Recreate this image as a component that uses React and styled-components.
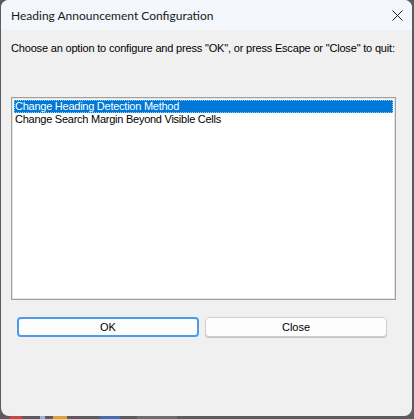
import React from 'react';
import styled, { createGlobalStyle } from 'styled-components';

const GlobalStyle = createGlobalStyle`
  html, body {
    margin: 0;
    padding: 0;
    background: #575d62;
    overflow: hidden;
  }
`;

const Desktop = styled.div`
  width: 414px;
  height: 419px;
  display: flex;
  flex-direction: column;
`;

const Window = styled.div`
  width: 411px;
  height: 416px;
  margin: 0 0 0 1px;
  border-radius: 8px;
  overflow: hidden;
  background: #f0f0f0;
  display: flex;
  flex-direction: column;
`;

const TitleBar = styled.div`
  height: 30px;
  flex: none;
  background: #f3f6fa;
  display: flex;
  align-items: center;
  justify-content: space-between;
  padding: 0 9px 0 10px;
  font-family: Lato, 'Noto Sans', sans-serif;
  font-size: 12px;
  color: #1a1a1a;
`;

const Body = styled.div`
  flex: 1;
  display: flex;
  flex-direction: column;
  padding: 11px 16px 0 10px;
  font-family: 'Liberation Sans', Arial, sans-serif;
  font-size: 11px;
  color: #000;
`;

const Prompt = styled.div`
  line-height: 14px;
  white-space: nowrap;
  letter-spacing: -0.18px;
`;

const ListBox = styled.div`
  margin-top: 42px;
  width: 385px;
  height: 203px;
  box-sizing: border-box;
  background: #fff;
  border: 1px solid #a0a0a0;
  box-shadow: inset 1px 1px 0 #e3e3e3, inset -1px -1px 0 #e3e3e3;
  padding: 2px 2px;
`;

const Item = styled.div`
  height: 13px;
  line-height: 13px;
  padding-left: 1px;
  box-sizing: border-box;
  white-space: nowrap;
  letter-spacing: -0.25px;
  color: ${(p) => (p.selected ? '#fff' : '#000')};
  background: ${(p) => (p.selected ? '#0078d7' : 'transparent')};
  outline: ${(p) => (p.selected ? '1px dotted #ffffff99' : 'none')};
  outline-offset: -1px;
`;

const ButtonRow = styled.div`
  margin: 17px 0 0 6px;
  display: flex;
  gap: 6px;
`;

const Button = styled.button`
  width: 182px;
  height: 20px;
  box-sizing: border-box;
  padding: 0;
  border-radius: 4px;
  font-family: 'Liberation Sans', Arial, sans-serif;
  font-size: 11px;
  color: #000;
  background: #fdfdfd;
  border: ${(p) => (p.primary ? '2px solid #4c9ce8' : '1px solid #d0d0d0')};
  box-shadow: ${(p) => (p.primary ? 'none' : '0 1px 0 #c4c4c4')};
`;

const TaskStrip = styled.div`
  height: 3px;
  display: flex;
  align-items: stretch;
`;

const Chip = styled.div`
  width: ${(p) => p.w}px;
  margin-left: ${(p) => p.gap}px;
  background: ${(p) => p.color};
`;

const CloseIcon = () => (
  <svg width="11" height="11" viewBox="0 0 11 11">
    <path d="M0.5 0.5 L10.5 10.5 M10.5 0.5 L0.5 10.5" stroke="#1a1a1a" strokeWidth="1" fill="none" />
  </svg>
);

export default function App() {
  return (
    <Desktop>
      <GlobalStyle />
      <Window>
        <TitleBar>
          <span>Heading Announcement Configuration</span>
          <CloseIcon />
        </TitleBar>
        <Body>
          <Prompt>
            Choose an option to configure and press "OK", or press Escape or "Close" to quit:
          </Prompt>
          <ListBox>
            <Item selected>Change Heading Detection Method</Item>
            <Item>Change Search Margin Beyond Visible Cells</Item>
          </ListBox>
          <ButtonRow>
            <Button primary>OK</Button>
            <Button>Close</Button>
          </ButtonRow>
        </Body>
      </Window>
      <TaskStrip>
        <Chip w={12} gap={10} color="#c9473f" />
        <Chip w={5} gap={18} color="#8fb7dc" />
        <Chip w={14} gap={8} color="#d9a832" />
        <Chip w={20} gap={33} color="#3e6fb5" />
        <Chip w={40} gap={17} color="#6b6f73" />
      </TaskStrip>
    </Desktop>
  );
}
